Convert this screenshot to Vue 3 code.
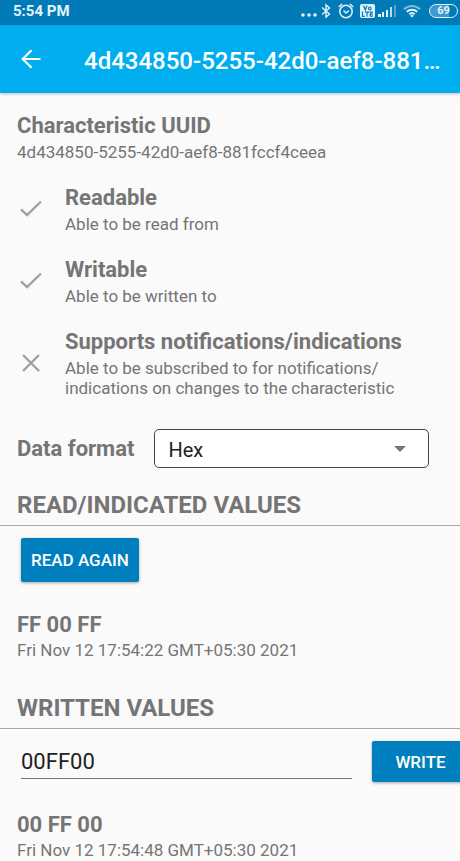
<script setup>
import { ref } from 'vue'

const uuid = '4d434850-5255-42d0-aef8-881fccf4ceea'
const format = ref('Hex')
const draft = ref('00FF00')

const properties = [
  { title: 'Readable', text: 'Able to be read from', on: true },
  { title: 'Writable', text: 'Able to be written to', on: true },
  {
    title: 'Supports notifications/indications',
    text: 'Able to be subscribed to for notifications/\nindications on changes to the characteristic',
    on: false,
  },
]
const readValues = [{ value: 'FF 00 FF', time: 'Fri Nov 12 17:54:22 GMT+05:30 2021' }]
const writtenValues = [{ value: '00 FF 00', time: 'Fri Nov 12 17:54:48 GMT+05:30 2021' }]
</script>

<template>
  <div class="screen">
    <div class="status">
      <span class="clock">5:54 PM</span>
      <div class="indicators">
        <svg width="16" height="16" viewBox="0 0 16 16" fill="#e4f3fb">
          <circle cx="2" cy="12" r="1.8" /><circle cx="8" cy="12" r="1.8" /><circle cx="14" cy="12" r="1.8" />
        </svg>
        <svg class="bluetooth" width="10" height="16" viewBox="0 0 10 16" fill="none" stroke="#e4f3fb" stroke-width="1.4">
          <path d="M1 4.5 8.5 11 5 14.2V1.8L8.5 5 1 11.5" />
        </svg>
        <svg class="alarm" width="16" height="16" viewBox="0 0 16 16" fill="none" stroke="#e4f3fb" stroke-width="1.5">
          <circle cx="8" cy="8.5" r="6.2" /><path d="M5.5 7.5 8 10l3-2.5M.8 4l3.200-3M15.200 4 12 1" />
        </svg>
        <svg class="volte" width="15" height="14" viewBox="0 0 15 14">
          <rect width="15" height="14" rx="2" fill="#e4f3fb" />
          <g fill="none" stroke="#007bb8" stroke-width="1.2">
            <path d="M3.5 1.5 5.300 6 7 1.5M9.800 3a1.300 1.400 0 1 1 0 2.800 1.300 1.400 0 1 1 0-2.800" />
            <path d="M2.5 7.5v4.800h2.300M5 8.100h4M7 8v4.800M13 8.100h-2.700v4.100H13M10.300 10.100h2.500" />
          </g>
        </svg>
        <svg class="signal" width="18" height="12" viewBox="0 0 18 12" fill="#e4f3fb">
          <rect y="9" width="3" height="3" /><rect x="4" y="7" width="2" height="5" />
          <rect x="8" y="5" width="2" height="7" />
          <rect x="12" y="2" width="2" height="10" opacity=".8" /><rect x="16" width="2" height="12" opacity=".35" />
        </svg>
        <svg class="wifi" width="18" height="14" viewBox="0 0 18 14" fill="none" stroke="#e4f3fb" stroke-width="1.9">
          <path d="M1 5.200a11.500 11.500 0 0 1 16 0" opacity=".55" />
          <path d="M3.700 7.900a7.600 7.600 0 0 1 10.600 0M6.300 10.300a4 4 0 0 1 5.400 0" />
          <path d="m7.200 11.700 1.800 1.800 1.800-1.800a2.500 2.500 0 0 0-3.600 0" fill="#e4f3fb" stroke="none" />
        </svg>
        <span class="battery">69</span>
      </div>
    </div>

    <header class="appbar">
      <button class="back" aria-label="Back">
        <svg width="20" height="20" viewBox="0 0 20 20" fill="none" stroke="#fff" stroke-width="2.2">
          <path d="M19.5 10H2M10.5 1.200 1.700 10l8.800 8.800" />
        </svg>
      </button>
      <h1>{{ uuid }}</h1>
    </header>

    <main>
      <section class="block">
        <h2>Characteristic UUID</h2>
        <p>{{ uuid }}</p>
      </section>

      <section v-for="item in properties" :key="item.title" class="block property">
        <svg width="22" height="22" viewBox="0 0 22 22" fill="none" stroke="#a0a0a0" stroke-width="2.4">
          <path v-if="item.on" d="M1 11.300 7 17 21 3.500" />
          <path v-else d="m3 3 16 16M19 3 3 19" />
        </svg>
        <div>
          <h2>{{ item.title }}</h2>
          <p>{{ item.text }}</p>
        </div>
      </section>

      <div class="format">
        <label for="format">Data format</label>
        <div class="picker">
          <select id="format" v-model="format">
            <option>Hex</option>
            <option>UTF-8</option>
          </select>
          <svg class="caret" width="12" height="6" viewBox="0 0 12 6"><path d="M0 0h12L6 6z" fill="#757575" /></svg>
        </div>
      </div>

      <h2 class="section">READ/INDICATED VALUES</h2>
      <div class="actions">
        <button class="btn read">READ AGAIN</button>
      </div>
      <section v-for="entry in readValues" :key="entry.time" class="block entry">
        <h2>{{ entry.value }}</h2>
        <p>{{ entry.time }}</p>
      </section>

      <h2 class="section written">WRITTEN VALUES</h2>
      <form class="compose" @submit.prevent>
        <input v-model="draft" type="text" aria-label="Value to write" />
        <button class="btn write">WRITE</button>
      </form>
      <section v-for="entry in writtenValues" :key="entry.time" class="block entry">
        <h2>{{ entry.value }}</h2>
        <p>{{ entry.time }}</p>
      </section>
    </main>
  </div>
</template>

<style>
body {
  margin: 0;
  background: #fafafa;
}
</style>

<style scoped>
* {
  box-sizing: border-box;
}
.screen {
  min-height: 100vh;
  overflow: hidden;
  background: #fafafa;
  color: #757575;
  font-family: Roboto, sans-serif;
}
h1,
h2,
p {
  margin: 0;
}
button,
input,
select {
  font-family: inherit;
}
.status {
  display: flex;
  align-items: center;
  justify-content: space-between;
  height: 25px;
  padding: 0 2px 3px 13px;
  background: #007bb8;
  color: #e4f3fb;
}
.clock {
  font-size: 15px;
  font-weight: 700;
}
.indicators {
  display: flex;
  align-items: center;
}
.bluetooth {
  margin-left: 4px;
}
.alarm {
  margin-left: 7px;
}
.volte {
  margin-left: 6px;
}
.signal {
  margin-left: 3px;
}
.wifi {
  margin-left: 7px;
}
.battery {
  width: 29px;
  height: 14px;
  margin-left: 8px;
  border: 1px solid #e4f3fb;
  border-radius: 7px;
  background: linear-gradient(90deg, #3c9bcb 70%, #007bb8 70%);
  font-size: 11px;
  font-weight: 700;
  line-height: 12px;
  text-align: center;
}
.appbar {
  display: flex;
  align-items: center;
  gap: 43px;
  height: 68px;
  padding: 0 18px 0 21px;
  background: #00aeef;
  box-shadow: 0 1px 3px rgba(0, 0, 0, 0.25);
  color: #fff;
}
.back {
  display: flex;
  padding: 0;
  border: 0;
  background: none;
}
.appbar h1 {
  flex: 1;
  min-width: 0;
  overflow: hidden;
  padding-top: 4px;
  font-size: 24px;
  font-weight: 500;
  line-height: 32px;
  text-overflow: ellipsis;
  white-space: nowrap;
}
main {
  padding-top: 17px;
}
.block {
  padding: 0 17px;
}
h2,
label {
  font-size: 22px;
  font-weight: 700;
  line-height: 32px;
}
p {
  font-size: 17px;
  line-height: 20px;
  white-space: pre-line;
}
.property {
  display: flex;
  align-items: center;
  gap: 23px;
  margin-top: 20px;
  padding: 0 20px;
}
.property svg {
  flex: none;
  margin-top: 2px;
}
.format {
  display: flex;
  align-items: center;
  gap: 20px;
  margin-top: 31px;
  padding: 0 31px 0 17px;
}
.picker {
  position: relative;
  flex: 1;
}
select {
  display: block;
  width: 100%;
  height: 39px;
  padding: 2px 40px 0 13px;
  border: 1px solid #444;
  border-radius: 5px;
  appearance: none;
  background: #fff;
  color: #212121;
  font-size: 20px;
}
.caret {
  position: absolute;
  top: 17px;
  right: 23px;
  pointer-events: none;
}
.section {
  margin-top: 20px;
  padding: 0 17px 3px;
  border-bottom: 1px solid #a8a8a8;
  font-size: 24px;
  line-height: 34px;
}
.actions {
  padding: 12px 21px 0;
}
.btn {
  border: 0;
  border-radius: 2px;
  background: #007fbf;
  box-shadow: 0 1px 3px rgba(0, 0, 0, 0.35);
  color: #fff;
  font-size: 17px;
  font-weight: 500;
}
.read {
  display: block;
  height: 44px;
  padding: 0 10px;
}
.entry {
  margin-top: 27px;
}
.entry h2 {
  line-height: 31px;
}
.written {
  margin-top: 31px;
}
.compose {
  display: flex;
  align-items: flex-start;
  gap: 20px;
  margin-right: -9px;
  padding: 12px 0 0 21px;
}
input {
  flex: 1;
  min-width: 0;
  height: 38px;
  padding: 4px 0 0;
  border: 0;
  border-bottom: 1px solid #757575;
  border-radius: 0;
  outline: 0;
  background: none;
  color: #212121;
  font-size: 22px;
}
.write {
  width: 97px;
  height: 41px;
}
</style>
